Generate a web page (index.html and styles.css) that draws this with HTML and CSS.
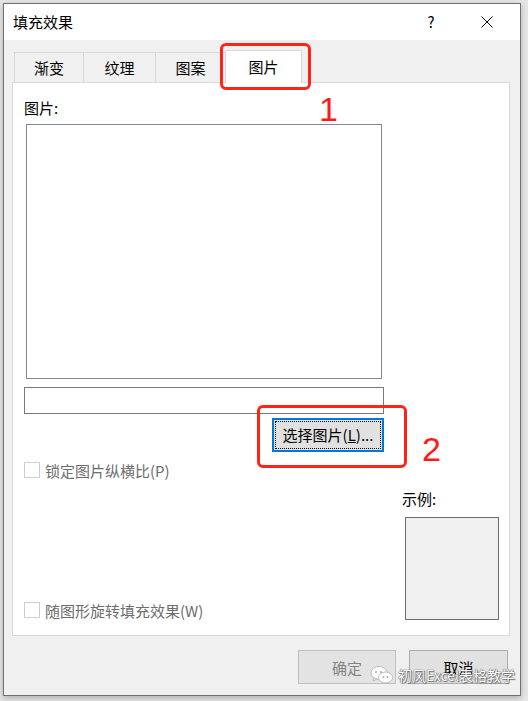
FILE: index.html
```html
<!DOCTYPE html>
<html lang="zh-CN">
<head>
  <meta charset="UTF-8">
  <title>填充效果</title>
  <link rel="stylesheet" href="styles.css">
</head>
<body>
  <div class="dialog">
    <!-- title bar -->
    <div class="titlebar">
      <span class="title">填充效果</span>
      <span class="help">?</span>
      <span class="close">
        <svg width="12" height="12" viewBox="0 0 12 12"><path d="M0.5 0.5 L11.5 11.5 M11.5 0.5 L0.5 11.5" stroke="#000" stroke-width="1" fill="none"/></svg>
      </span>
    </div>

    <div class="body">
      <div class="tabs">
        <div class="tab t1">渐变</div>
        <div class="tab t2">纹理</div>
        <div class="tab t3">图案</div>
        <div class="tab active">图片</div>
      </div>

      <div class="panel">
        <div class="label">图片:</div>
        <div class="picture"></div>
        <div class="field"></div>
        <div class="pick-wrap">
          <button class="pick"><span class="focus">选择图片(<u>L</u>)...</span></button>
        </div>

        <div class="lower">
          <div class="checks">
            <div class="check"><span class="box"></span>锁定图片纵横比(P)</div>
            <div class="check"><span class="box"></span>随图形旋转填充效果(W)</div>
          </div>
          <div class="sample">
            <div class="label">示例:</div>
            <div class="preview"></div>
          </div>
        </div>
      </div>

      <div class="footer">
        <button class="btn disabled">确定</button>
        <button class="btn">取消</button>
      </div>
    </div>

    <!-- annotations drawn over the screenshot -->
    <div class="mark mark1"></div>
    <div class="mark mark2"></div>
    <div class="num num1">1</div>
    <div class="num num2">2</div>

    <div class="watermark">
      <svg width="24" height="20" viewBox="0 0 24 20">
        <ellipse cx="9" cy="8" rx="8" ry="6.5" fill="#fff" stroke="#bbb" stroke-width="1"/>
        <path d="M4 13 L3 16 L7 14 Z" fill="#fff" stroke="#bbb" stroke-width="1"/>
        <ellipse cx="15.5" cy="12.5" rx="7" ry="5.5" fill="#fff" stroke="#bbb" stroke-width="1"/>
        <circle cx="6" cy="7" r="1" fill="#aaa"/>
        <circle cx="11" cy="7" r="1" fill="#aaa"/>
        <circle cx="13.5" cy="12" r="0.9" fill="#aaa"/>
        <circle cx="17.5" cy="12" r="0.9" fill="#aaa"/>
      </svg>
      <span>初风Excel表格教学</span>
    </div>
  </div>
</body>
</html>
```

FILE: styles.css
```css
* {
  box-sizing: border-box;
}

body {
  margin: 0;
  width: 528px;
  height: 701px;
  overflow: hidden;
  background: #e6e6e6;
  font-family: "Noto Sans CJK SC", "Noto Sans", sans-serif;
  font-size: 15px;
  color: #000;
}

.dialog {
  position: relative;
  margin: 3px 0 0 3px;
  width: 518px;
  height: 693px;
  border: 1px solid #707070;
  background: #f0f0f0;
  box-shadow: 0 2px 6px rgba(0, 0, 0, 0.25);
}

/* title bar */
.titlebar {
  height: 36px;
  background: #fff;
  display: flex;
  align-items: center;
  padding: 0 10px 0 9px;
}

.title {
  line-height: 20px;
}

.help {
  margin-left: auto;
  width: 46px;
  text-align: center;
  line-height: 20px;
}

.close {
  width: 46px;
  margin-left: 10px;
  display: flex;
  justify-content: center;
}

/* tabs + panel */
.body {
  padding: 10px 9px 0 8px;
}

.tabs {
  display: flex;
  align-items: flex-end;
  height: 32px;
  padding-left: 2px;
}

.tab {
  height: 30px;
  border: 1px solid #d9d9d9;
  border-bottom: none;
  background: #f0f0f0;
  display: flex;
  align-items: center;
  justify-content: center;
  margin-left: -1px;
}

.t1 {
  width: 70px;
  margin-left: 0;
}

.t2 {
  width: 73px;
}

.t3 {
  width: 71px;
}

.tab.active {
  width: 77px;
  height: 33px;
  margin-bottom: -1px;
  background: #fff;
  position: relative;
  z-index: 1;
  padding-bottom: 2px;
}

.panel {
  width: 498px;
  background: #fff;
  border: 1px solid #d9d9d9;
  padding: 15px 10px 15px 11px;
}

.label {
  line-height: 20px;
  height: 20px;
}

.picture {
  margin: 6px 0 0 2px;
  width: 356px;
  height: 255px;
  border: 1px solid #828790;
}

.field {
  margin-top: 8px;
  width: 360px;
  height: 27px;
  border: 1px solid #7a7a7a;
}

.pick-wrap {
  width: 360px;
  display: flex;
  justify-content: flex-end;
  margin-top: 4px;
}

.pick {
  width: 112px;
  height: 34px;
  border: 2px solid #0078d7;
  background: #e1e1e1;
  padding: 1px;
  font: inherit;
  color: #000;
}

.pick .focus {
  display: flex;
  align-items: center;
  justify-content: center;
  height: 100%;
  border: 1px dotted #000;
  line-height: 20px;
}

.lower {
  display: flex;
  height: 168px;
}

.checks {
  flex: 1;
  display: flex;
  flex-direction: column;
  justify-content: space-between;
  padding-top: 8px;
}

.check {
  display: flex;
  align-items: center;
  height: 20px;
  color: #6d6d6d;
}

.check .box {
  width: 16px;
  height: 16px;
  border: 1px solid #cccccc;
  background: #fff;
  margin-right: 5px;
}

.sample {
  width: 97px;
  padding-top: 37px;
}

.preview {
  margin: 8px 0 0 3px;
  width: 94px;
  height: 103px;
  border: 1px solid #6b6b6b;
  background: #f0f0f0;
}

.footer {
  display: flex;
  justify-content: flex-end;
  gap: 13px;
  margin-top: 14px;
  padding-right: 3px;
}

.btn {
  width: 98px;
  height: 34px;
  border: 1px solid #adadad;
  background: #e1e1e1;
  font: inherit;
  color: #000;
  padding: 0;
}

.btn:last-child {
  width: 99px;
}

.btn.disabled {
  background: #e3e3e3;
  border-color: #bfbfbf;
  color: #838383;
}

/* red annotations */
.mark {
  position: absolute;
  border: 3px solid #ff2418;
  border-radius: 6px;
}

.mark1 {
  left: 216px;
  top: 39px;
  width: 91px;
  height: 47px;
  z-index: 2;
}

.mark2 {
  left: 253px;
  top: 401px;
  width: 150px;
  height: 63px;
}

.num {
  position: absolute;
  font-family: "Liberation Sans", sans-serif;
  font-size: 34px;
  line-height: 34px;
  color: #ff1a1a;
}

.num1 {
  left: 315px;
  top: 88px;
}

.num2 {
  left: 418px;
  top: 428px;
}

.watermark {
  position: absolute;
  left: 366px;
  top: 661px;
  display: flex;
  align-items: center;
  gap: 4px;
  font-size: 14px;
  color: #fff;
  text-shadow: 0 0 1px #555, 0 0 1px #555, 1px 1px 1px #777;
}
```
